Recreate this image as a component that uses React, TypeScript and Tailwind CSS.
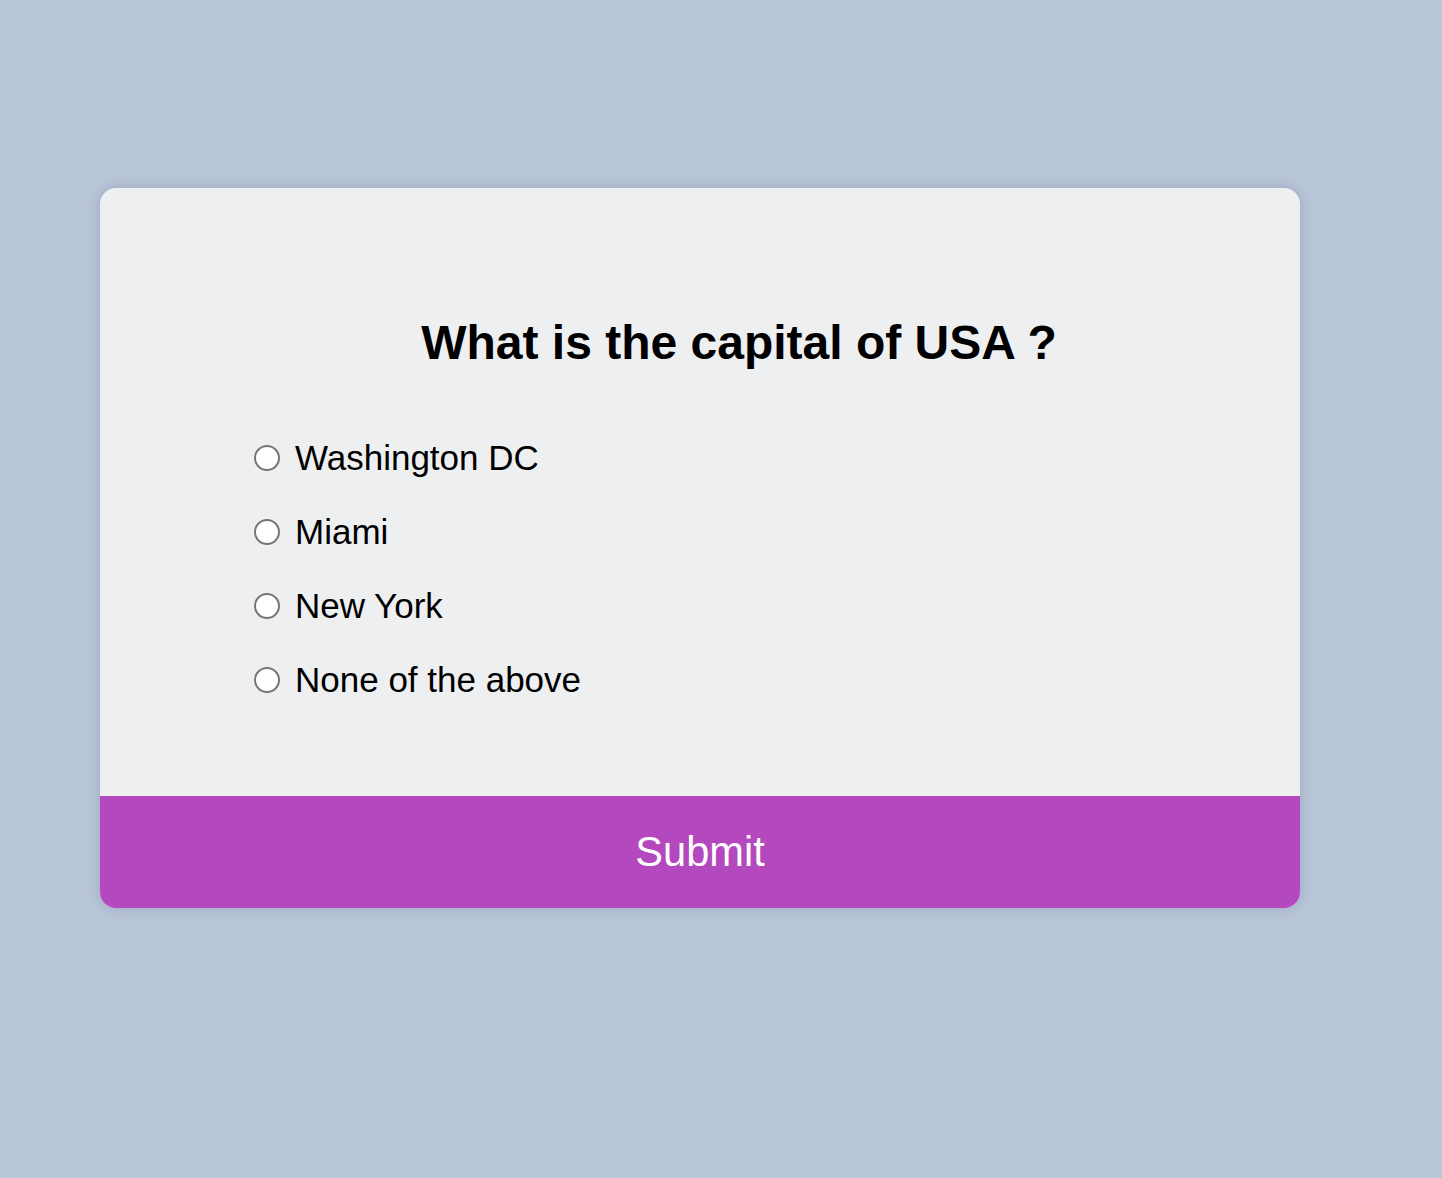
const options = ['Washington DC', 'Miami', 'New York', 'None of the above']

export default function App() {
  return (
    <div className="min-h-[1178px] w-full bg-[#b9c5d9] pt-[188px] px-[100px] font-['Liberation_Sans',Arial,sans-serif]">
      {/* Quiz card */}
      <div className="w-[1200px] rounded-[16px] bg-[#eeeff1] overflow-hidden shadow-[0_0_12px_2px_rgba(90,100,130,0.22)]">
        <div className="pt-[127px] pb-[79px]">
          <h2 className="pl-[78px] text-center text-[48px] leading-[56px] font-bold text-black">
            What is the capital of USA ?
          </h2>

          <ul className="mt-[50px] pl-[154px]">
            {options.map((option) => (
              <li key={option}>
                <label className="flex h-[74px] items-center gap-[15px] cursor-pointer">
                  <input
                    type="radio"
                    name="answer"
                    className="appearance-none w-[26px] h-[26px] rounded-full border-[2px] border-[#767676] bg-white shrink-0"
                  />
                  <span className="text-[35px] leading-[74px] text-black">{option}</span>
                </label>
              </li>
            ))}
          </ul>
        </div>

        <button className="flex h-[112px] w-full items-center justify-center bg-[#b448be] text-[41.6px] leading-none text-white">
          Submit
        </button>
      </div>
    </div>
  )
}
